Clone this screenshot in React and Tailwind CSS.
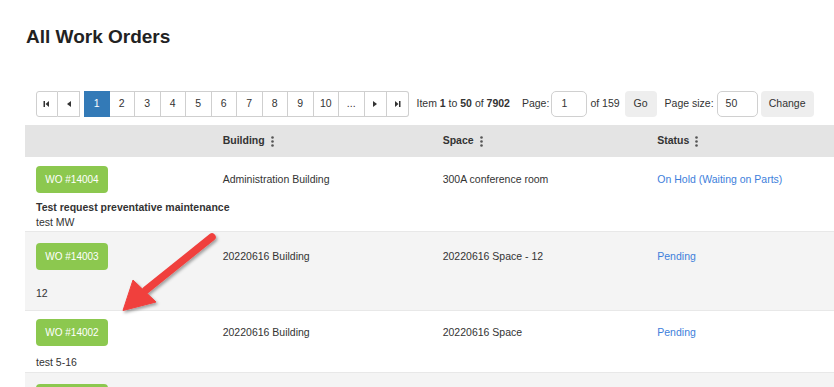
import React from 'react';

const font = { fontFamily: '"Liberation Sans", Arial, sans-serif' };

const rows = [
  {
    wo: 'WO #14004',
    building: 'Administration Building',
    space: '300A conference room',
    status: 'On Hold (Waiting on Parts)',
    title: 'Test request preventative maintenance',
    note: 'test MW',
    bg: 'bg-white',
    pad: 'pt-[9px] pb-[1px]',
    gap: 'mt-[7px]',
  },
  {
    wo: 'WO #14003',
    building: '20220616 Building',
    space: '20220616 Space - 12',
    status: 'Pending',
    title: '',
    note: '12',
    bg: 'bg-[#f4f4f4]',
    pad: 'pt-[11px] pb-[9px]',
    gap: 'mt-[16px]',
  },
  {
    wo: 'WO #14002',
    building: '20220616 Building',
    space: '20220616 Space',
    status: 'Pending',
    title: '',
    note: 'test 5-16',
    bg: 'bg-white',
    pad: 'pt-[8px] pb-[2px]',
    gap: 'mt-[9px]',
  },
  {
    wo: 'WO #14001',
    building: '20220616 Building',
    space: '20220616 Space',
    status: 'Pending',
    title: '',
    note: '',
    bg: 'bg-[#f4f4f4]',
    pad: 'pt-[11px] pb-[10px]',
    gap: 'mt-[9px]',
  },
];

const NavIcon = ({ dir, bar }) => (
  <svg width="8" height="8" viewBox="0 0 8 8" fill="#333">
    {dir === 'left' ? (
      <>
        {bar && <rect x="0.5" y="1" width="1.5" height="6" />}
        <polygon points={bar ? '6,1 6,7 2.5,4' : '6,1 6,7 2,4'} />
      </>
    ) : (
      <>
        <polygon points={bar ? '2,1 2,7 5.5,4' : '2,1 2,7 6,4'} />
        {bar && <rect x="6" y="1" width="1.5" height="6" />}
      </>
    )}
  </svg>
);

const Dots = () => (
  <svg width="3" height="11" viewBox="0 0 3 11" fill="#555" className="ml-[6px]">
    <circle cx="1.5" cy="1.5" r="1.3" />
    <circle cx="1.5" cy="5.5" r="1.3" />
    <circle cx="1.5" cy="9.5" r="1.3" />
  </svg>
);

const Pager = () => {
  const pages = ['1', '2', '3', '4', '5', '6', '7', '8', '9', '10', '...'];
  return (
    <div className="flex items-center">
      <div className="flex h-[26px]">
        <button className="w-[22px] h-full flex items-center justify-center border border-[#cfcfcf] rounded-l-[3px] bg-white">
          <NavIcon dir="left" bar />
        </button>
        <button className="w-[22px] h-full flex items-center justify-center border border-l-0 border-[#cfcfcf] bg-white">
          <NavIcon dir="left" />
        </button>
      </div>
      <div className="flex h-[26px] ml-[4px]">
        {pages.map((p, i) => (
          <button
            key={p}
            className={
              i === 0
                ? 'w-[25.5px] h-full flex items-center justify-center bg-[#337ab7] text-white border border-[#337ab7]'
                : 'w-[25.5px] h-full flex items-center justify-center bg-white text-[#333] border border-l-0 border-[#cfcfcf]'
            }
          >
            {p}
          </button>
        ))}
        <button className="w-[22px] h-full flex items-center justify-center border border-l-0 border-[#cfcfcf] bg-white">
          <NavIcon dir="right" />
        </button>
        <button className="w-[22px] h-full flex items-center justify-center border border-l-0 border-[#cfcfcf] rounded-r-[3px] bg-white">
          <NavIcon dir="right" bar />
        </button>
      </div>
      <div className="ml-[8px] text-[#333]">
        Item <b>1</b> to <b>50</b> of <b>7902</b>
      </div>
      <div className="ml-[12px] text-[#333]">Page:</div>
      <div className="ml-[2px] w-[36px] h-[26px] border border-[#d0d0d0] rounded-[5px] flex items-center pl-[9px] text-[#333]">1</div>
      <div className="ml-[3px] text-[#333]">of 159</div>
      <button className="ml-[5px] w-[32px] h-[26px] rounded-[4px] bg-[#eeeeee] text-[#333]">Go</button>
      <div className="ml-[8px] text-[#333]">Page size:</div>
      <div className="ml-[3px] w-[41px] h-[26px] border border-[#d0d0d0] rounded-[5px] flex items-center pl-[8px] text-[#333]">50</div>
      <button className="ml-[3px] w-[53px] h-[26px] rounded-[4px] bg-[#eeeeee] text-[#333]">Change</button>
    </div>
  );
};

const Arrow = () => (
  <svg className="absolute left-0 top-0 pointer-events-none" width="834" height="387" viewBox="0 0 834 387">
    <defs>
      <filter id="sh" x="-20%" y="-20%" width="140%" height="140%">
        <feDropShadow dx="1.5" dy="2" stdDeviation="1.5" floodColor="#000" floodOpacity="0.35" />
      </filter>
    </defs>
    <g filter="url(#sh)" fill="#f0403e" stroke="#f0403e">
      <line x1="212" y1="237" x2="146" y2="290" strokeWidth="7.5" strokeLinecap="round" />
      <polygon points="123,310.5 133,280 156,302" strokeWidth="1" strokeLinejoin="round" />
    </g>
  </svg>
);

export default function App() {
  return (
    <div className="relative w-[834px] h-[387px] overflow-hidden bg-white text-[10.5px]" style={font}>
      <h1 className="ml-[26px] pt-[26px] text-[19px] leading-[22px] font-bold text-[#222]">All Work Orders</h1>

      <div className="ml-[36px] mt-[43px]">
        <Pager />
      </div>

      <div className="ml-[25px] mt-[8px]">
        <div className="flex items-center h-[32px] bg-[#e4e4e4] pl-[11px] font-bold text-[#333]">
          <div className="w-[186.7px]" />
          <div className="w-[220px] flex items-center">Building<Dots /></div>
          <div className="w-[214.6px] flex items-center">Space<Dots /></div>
          <div className="flex items-center">Status<Dots /></div>
        </div>

        {rows.map((r, i) => (
          <div key={r.wo} className={`${r.bg} ${r.pad} pl-[11px] ${i > 0 ? 'border-t border-[#e8e8e8]' : ''}`}>
            <div className="flex items-center text-[#333]">
              <div className="w-[186.7px]">
                <div className="w-[72px] h-[27px] rounded-[4px] bg-[#8cc84f] text-white text-[10px] flex items-center justify-center">
                  {r.wo}
                </div>
              </div>
              <div className="w-[220px]">{r.building}</div>
              <div className="w-[214.6px]">{r.space}</div>
              <div className="text-[#3d80db]">{r.status}</div>
            </div>
            {(r.title || r.note) && (
              <div className={`${r.gap} leading-[15px] text-[#333]`}>
                {r.title && <div className="font-bold">{r.title}</div>}
                {r.note && <div>{r.note}</div>}
              </div>
            )}
          </div>
        ))}
      </div>

      <Arrow />
    </div>
  );
}
